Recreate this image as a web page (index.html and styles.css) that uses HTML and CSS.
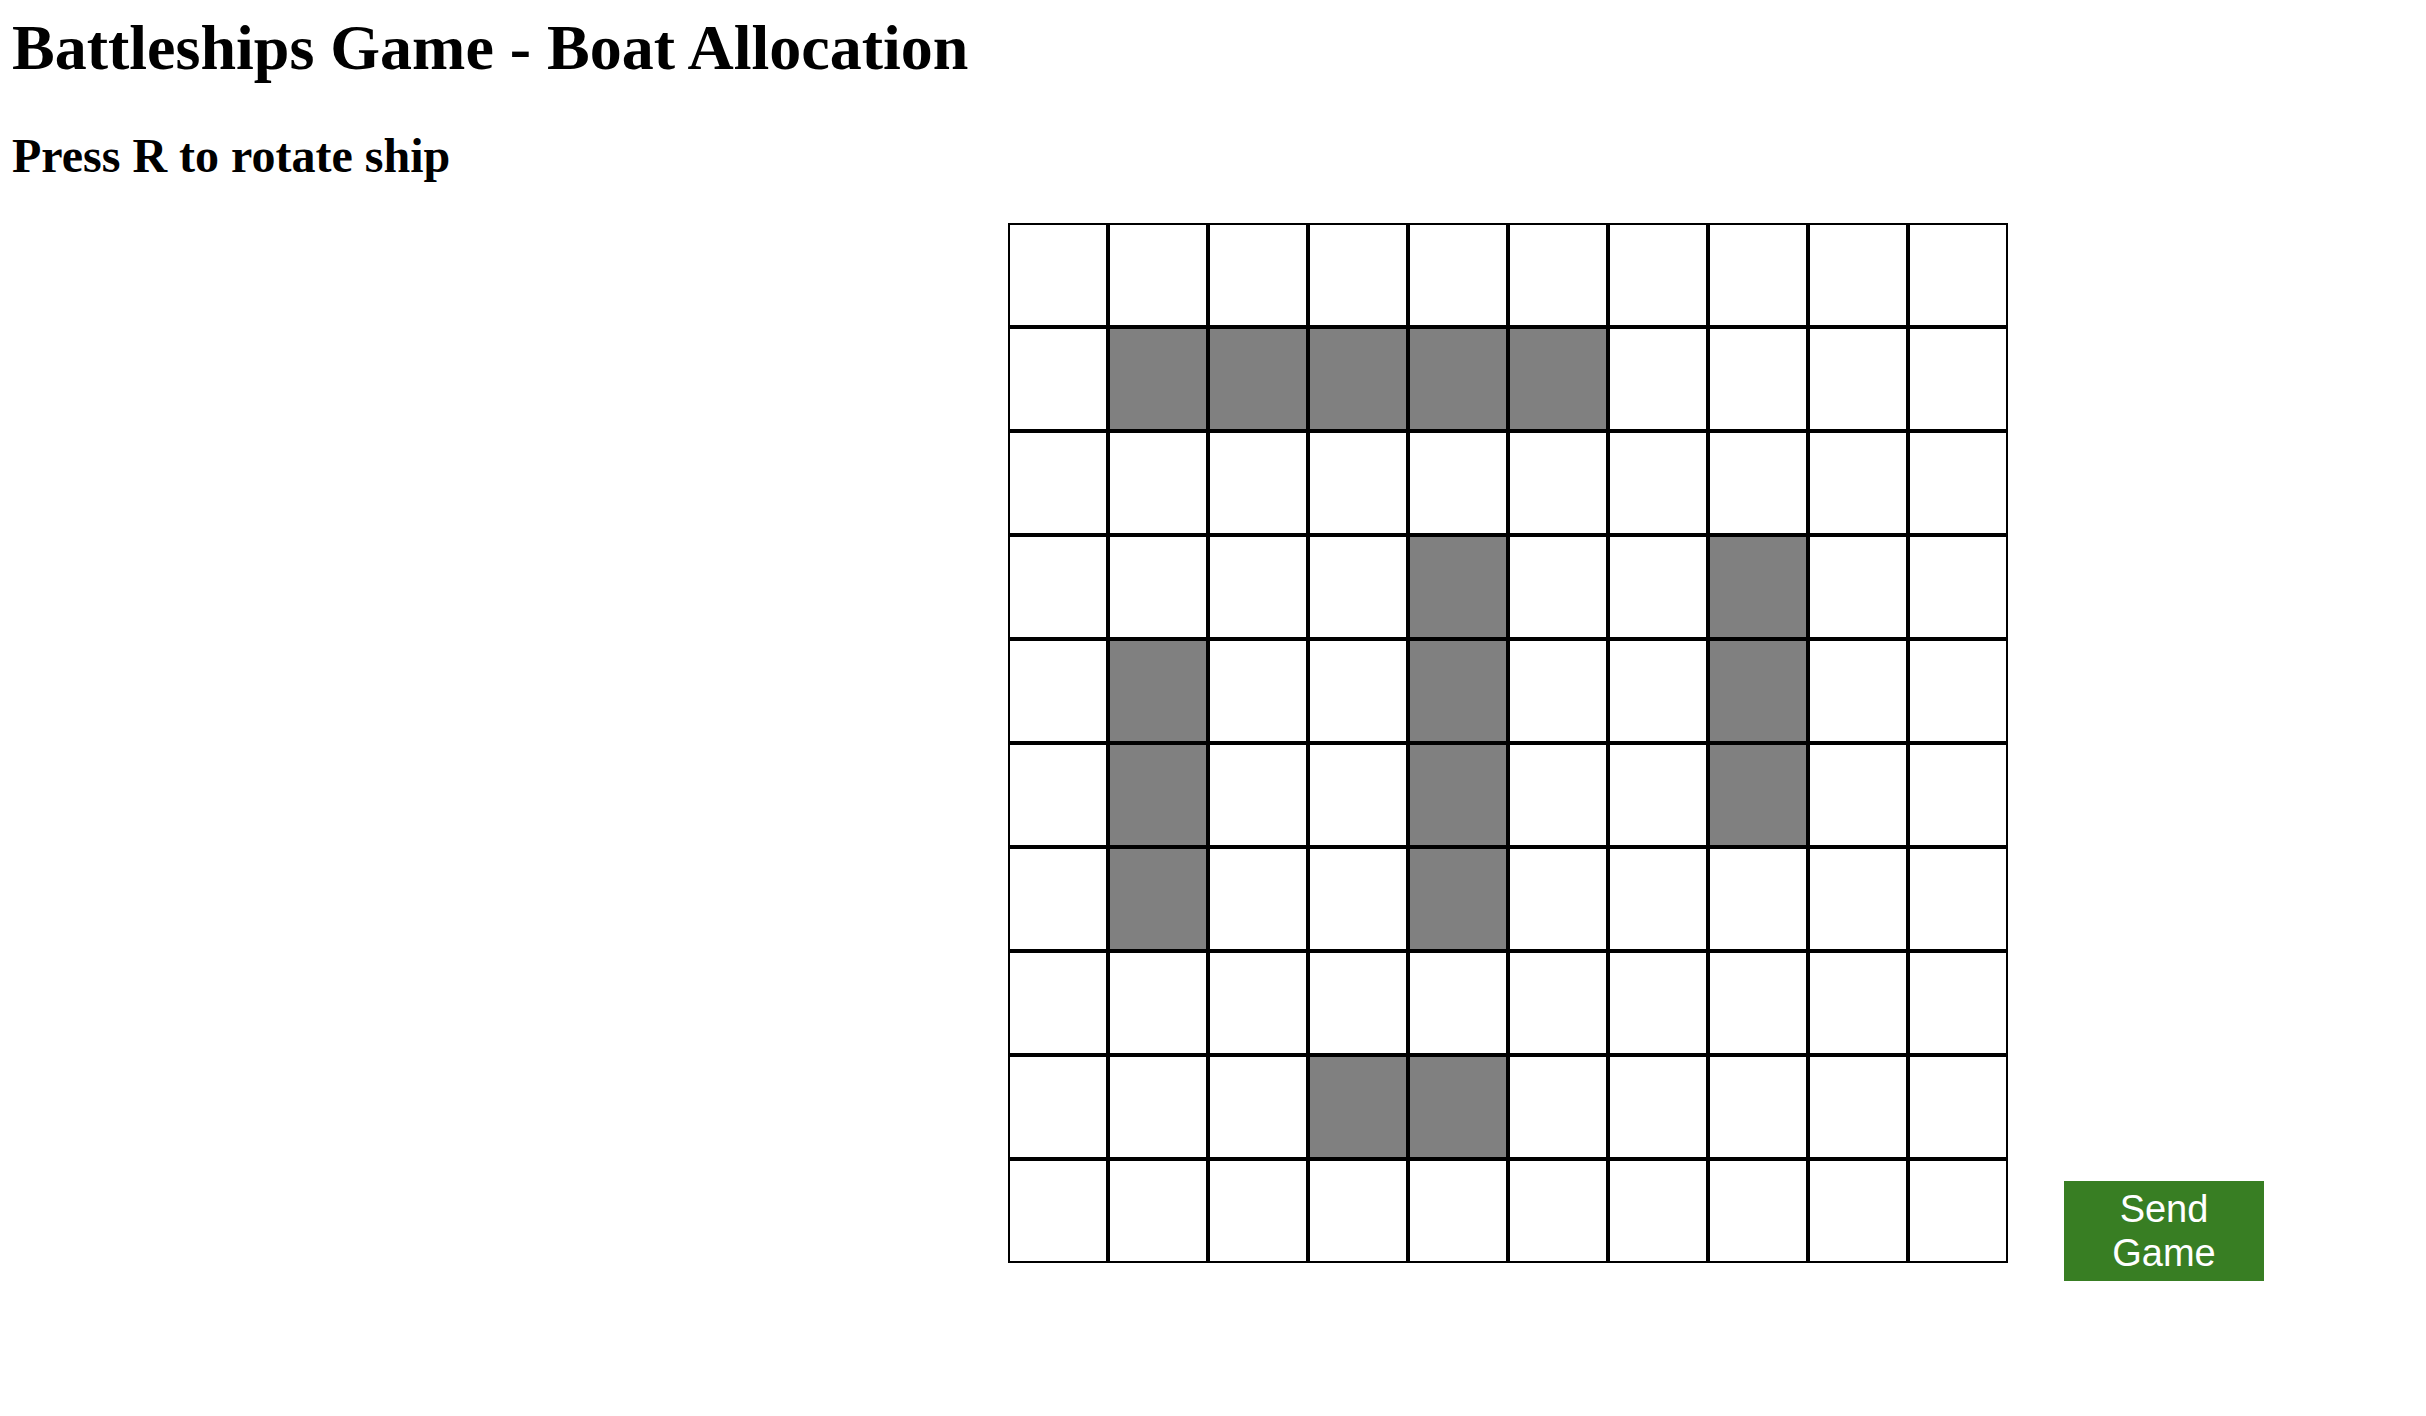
FILE: index.html
```html
<!DOCTYPE html>
<html lang="en">
<head>
<meta charset="utf-8">
<title>Battleships Game - Boat Allocation</title>
<link rel="stylesheet" href="styles.css">
</head>
<body>
<h1 class="title">Battleships Game - Boat Allocation</h1>
<h2 class="hint">Press R to rotate ship</h2>
<div class="board-row">
  <div class="dock"></div>
  <div class="board">
    <div class="cell"></div><div class="cell"></div><div class="cell"></div><div class="cell"></div><div class="cell"></div><div class="cell"></div><div class="cell"></div><div class="cell"></div><div class="cell"></div><div class="cell"></div>
    <div class="cell"></div><div class="cell ship"></div><div class="cell ship"></div><div class="cell ship"></div><div class="cell ship"></div><div class="cell ship"></div><div class="cell"></div><div class="cell"></div><div class="cell"></div><div class="cell"></div>
    <div class="cell"></div><div class="cell"></div><div class="cell"></div><div class="cell"></div><div class="cell"></div><div class="cell"></div><div class="cell"></div><div class="cell"></div><div class="cell"></div><div class="cell"></div>
    <div class="cell"></div><div class="cell"></div><div class="cell"></div><div class="cell"></div><div class="cell ship"></div><div class="cell"></div><div class="cell"></div><div class="cell ship"></div><div class="cell"></div><div class="cell"></div>
    <div class="cell"></div><div class="cell ship"></div><div class="cell"></div><div class="cell"></div><div class="cell ship"></div><div class="cell"></div><div class="cell"></div><div class="cell ship"></div><div class="cell"></div><div class="cell"></div>
    <div class="cell"></div><div class="cell ship"></div><div class="cell"></div><div class="cell"></div><div class="cell ship"></div><div class="cell"></div><div class="cell"></div><div class="cell ship"></div><div class="cell"></div><div class="cell"></div>
    <div class="cell"></div><div class="cell ship"></div><div class="cell"></div><div class="cell"></div><div class="cell ship"></div><div class="cell"></div><div class="cell"></div><div class="cell"></div><div class="cell"></div><div class="cell"></div>
    <div class="cell"></div><div class="cell"></div><div class="cell"></div><div class="cell"></div><div class="cell"></div><div class="cell"></div><div class="cell"></div><div class="cell"></div><div class="cell"></div><div class="cell"></div>
    <div class="cell"></div><div class="cell"></div><div class="cell"></div><div class="cell ship"></div><div class="cell ship"></div><div class="cell"></div><div class="cell"></div><div class="cell"></div><div class="cell"></div><div class="cell"></div>
    <div class="cell"></div><div class="cell"></div><div class="cell"></div><div class="cell"></div><div class="cell"></div><div class="cell"></div><div class="cell"></div><div class="cell"></div><div class="cell"></div><div class="cell"></div>
  </div>
  <button class="send-btn" type="button">Send<br>Game</button>
</div>
</body>
</html>
```
FILE: styles.css
```css
html, body {
  background: #ffffff;
}
body {
  margin: 0;
  padding: 11px 12px 0 12px;
  font-family: "Liberation Serif", "Times New Roman", serif;
  color: #000000;
}
.title {
  margin: 0;
  font-size: 64px;
  font-weight: bold;
  line-height: normal;
}
.hint {
  margin: 43px 0 40px 0;
  font-size: 48px;
  font-weight: bold;
  line-height: normal;
}
.board-row {
  display: flex;
  align-items: flex-start;
}
.dock {
  width: 996px;
  flex: 0 0 996px;
}
.board {
  display: grid;
  grid-template-columns: repeat(10, 100px);
  grid-auto-rows: 104px;
  width: 1000px;
  flex: 0 0 1000px;
}
.cell {
  box-sizing: border-box;
  border: 2px solid #000000;
  background: #ffffff;
}
.cell.ship {
  background: #808080;
}
.send-btn {
  box-sizing: border-box;
  margin: 958px 0 0 56px;
  width: 200px;
  height: 100px;
  padding: 0;
  border: none;
  background: #387e23;
  color: #ffffff;
  font-family: "Liberation Sans", Arial, sans-serif;
  font-size: 38px;
  line-height: 44px;
  text-align: center;
}
```
